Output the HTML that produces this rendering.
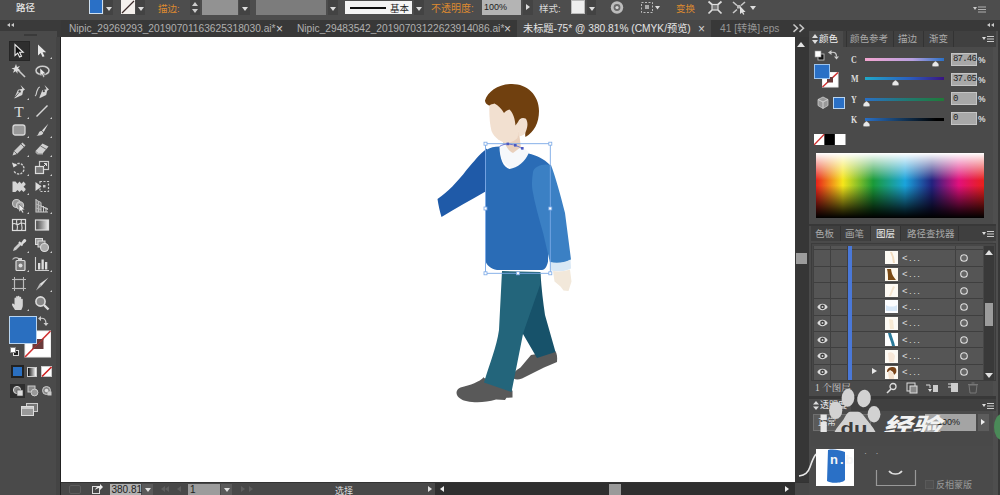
<!DOCTYPE html>
<html><head><meta charset="utf-8">
<style>
*{margin:0;padding:0;box-sizing:border-box}
html,body{width:1000px;height:495px;overflow:hidden;background:#4a4a4a;font-family:"Liberation Sans","Noto Sans CJK SC",sans-serif;font-size:9px;color:#d6d6d6}
.a,.a *{position:absolute}
#top{left:0;top:0;width:1000px;height:20px;background:#4d4d4d}
#tabs{left:61px;top:20px;width:748px;height:17px;background:#383838}
.tab{top:0;height:17px;line-height:18.5px;font-size:10.2px;color:#b0b0b0;white-space:nowrap}
#canvas{left:61px;top:37px;width:734px;height:445px;background:#fff}
#left{left:0;top:20px;width:61px;height:475px;background:#4a4a4a}
#vscroll{left:795px;top:37px;width:14px;height:445px;background:#363636}
#status{left:61px;top:482px;width:748px;height:13px;background:#484848;border-top:1px solid #333}
#right{left:809px;top:20px;width:191px;height:475px;background:#4a4a4a}
.or{color:#dd8a30}
.t{white-space:nowrap;line-height:1}
.dd{background:#434343}
.dd:after{content:"";position:absolute;left:50%;top:50%;margin:-1px 0 0 -3px;border:3px solid transparent;border-top:4px solid #ddd;border-bottom:0}
</style></head><body>
<!-- TOP -->
<div id="top" class="a">
 <div class="t" style="left:16px;top:2.5px;font-size:9.5px;color:#e8e8e8;font-weight:500">路径</div>
 <div style="left:89px;top:0;width:14px;height:14px;background:#2a70c6;border:1px solid #cfe0f0;border-top:0"></div>
 <div class="dd" style="left:104px;top:0;width:9px;height:15px"></div>
 <svg style="left:121px;top:0" width="14" height="14"><rect width="14" height="14" fill="#f4f0ec"/><line x1="1" y1="13" x2="13" y2="1" stroke="#3a2a2a" stroke-width="1.3"/></svg>
 <div class="dd" style="left:136px;top:0;width:9px;height:15px"></div>
 <div class="t or" style="left:158px;top:4px;font-size:9.5px">描边:</div>
 <div style="left:190px;top:0;width:10px;height:15px;background:#444"></div>
 <div style="left:192px;top:2px;border:3px solid transparent;border-bottom:4px solid #ccc;border-top:0"></div>
 <div style="left:192px;top:9px;border:3px solid transparent;border-top:4px solid #ccc;border-bottom:0"></div>
 <div style="left:202px;top:0;width:36px;height:15px;background:#929292"></div>
 <div class="dd" style="left:239px;top:0;width:11px;height:15px"></div>
 <div style="left:256px;top:0;width:70px;height:15px;background:#7c7c7c"></div>
 <div class="dd" style="left:328px;top:0;width:10px;height:15px"></div>
 <div style="left:345px;top:1px;width:67px;height:13px;background:#f4f4f4"></div>
 <div style="left:350px;top:7px;width:36px;height:2px;background:#111"></div>
 <div class="t" style="left:390px;top:4px;font-size:9.5px;color:#222">基本</div>
 <div class="dd" style="left:414px;top:0;width:10px;height:15px"></div>
 <div class="t or" style="left:431px;top:4px;font-size:10px">不透明度:</div>
 <div style="left:482px;top:0;width:39px;height:15px;background:#b4b4b4"></div>
 <div class="t" style="left:484px;top:3px;font-size:9px;color:#222">100%</div>
 <div style="left:523px;top:0;width:10px;height:15px;background:#444"></div>
 <div style="left:526px;top:4px;border:3px solid transparent;border-left:4px solid #ddd;border-right:0"></div>
 <div class="t" style="left:539px;top:4px;font-size:9.5px;color:#d8d8d8">样式:</div>
 <div style="left:571px;top:0;width:14px;height:14px;background:#eee;border:1px solid #bbb"></div>
 <div class="dd" style="left:587px;top:0;width:9px;height:15px"></div>
 <svg style="left:609px;top:0" width="16" height="16"><circle cx="8" cy="7.5" r="6.2" fill="#bdbdbd"/><circle cx="8" cy="7.5" r="3.4" fill="#6a6a6a"/><circle cx="8" cy="7.5" r="1.6" fill="#d8d8d8"/></svg>
 <svg style="left:640px;top:1px" width="22" height="14"><rect x="1.5" y="1.5" width="11" height="10" fill="none" stroke="#bbb" stroke-dasharray="2 1.5"/><rect x="5" y="4" width="4" height="4" fill="#aaa"/><path d="M15 5l5 0l-2.5 3.5z" fill="#ddd"/></svg>
 <div class="t or" style="left:676px;top:4px;font-size:9.5px">变换</div>
 <svg style="left:707px;top:0" width="16" height="15"><rect x="5" y="4.500" width="6" height="5.500" fill="#777" stroke="#ddd" stroke-width="1.200"/><path d="M1.500 1.500l3.500 3M14.500 1.500l-3.500 3M1.500 13.500l3.500-3.500M14.500 13.500l-3.500-3.500" stroke="#ddd" stroke-width="1.700"/></svg>
 <svg style="left:731px;top:0" width="16" height="15"><path d="M2 2l4 3.500M14 2l-4 3.500M2 13l4-3.500" stroke="#c8c8c8" stroke-width="1.600"/><rect x="6" y="5" width="3.500" height="3.500" fill="#bbb"/><path d="M9 6v8l2-1.500 1.200 2.300 1.200-.6-1.200-2.300h2.400z" fill="#e0e0e0"/></svg>
 <div style="left:750px;top:6px;border:3.500px solid transparent;border-top:4px solid #ddd;border-bottom:0"></div>
 <svg style="left:973px;top:5px" width="14" height="10"><path d="M0 2l4 0l-2 3z" fill="#ccc"/><path d="M5 2h8M5 4.5h8M5 7h8" stroke="#b0b0b0" stroke-width="1.1"/></svg>
</div>
<!-- LEFT -->
<div id="left" class="a">
 <div style="left:0;top:0;width:57px;height:11px;background:#3a3a3a"></div>
 <div style="left:57px;top:0;width:4px;height:17px;background:#3a3a3a"></div>
 <div style="left:7px;top:3px;border:2.5px solid transparent;border-right:3px solid #ccc;border-left:0"></div>
 <div style="left:11px;top:3px;border:2.5px solid transparent;border-right:3px solid #ccc;border-left:0"></div>
 <div style="left:24px;top:14px;width:13px;height:2px;background:#3a3a3a"></div>
 <div style="left:56px;top:17px;width:4px;height:458px;background:#444"></div><div style="left:60px;top:17px;width:1.5px;height:458px;background:#222"></div><div id="tools"><div style="left:9px;top:21px;width:21px;height:20px;background:#2e2e2e;border:1px solid #262626"></div><svg style="left:11px;top:23px" width="16" height="16" viewBox="0 0 16 16" ><path d="M4 1.5v11l2.7-2.4 1.9 4 1.9-.9-1.9-3.9h3.6z" fill="#111" stroke="#eee" stroke-width="1.1"/></svg><svg style="left:34px;top:23px" width="16" height="16" viewBox="0 0 16 16" ><path d="M4 1.5v11l2.7-2.4 1.9 4 1.9-.9-1.9-3.9h3.6z" fill="#e6e6e6"/></svg><div style="left:50px;top:37px;border:1.500px solid transparent;border-right-color:#ccc;border-bottom-color:#ccc"></div><svg style="left:11px;top:44px" width="16" height="16" viewBox="0 0 16 16" ><path d="M5 4l9 9" stroke="#ccc" stroke-width="1.6"/><path d="M5 0l1 3 3-1-2 2.5 2.5 2-3 .2 0 3-1.8-2.5-2.7 1.5 1.2-3-2.7-1.5 3-.5z" fill="#ddd"/></svg><svg style="left:34px;top:44px" width="16" height="16" viewBox="0 0 16 16" ><ellipse cx="8.5" cy="6.5" rx="6.5" ry="4.3" fill="none" stroke="#ccc" stroke-width="1.6"/><path d="M6 4v8l2-1.6 1.3 3 1.4-.6-1.3-3h2.6z" fill="#e6e6e6" stroke="#444" stroke-width=".5"/></svg><svg style="left:11px;top:64px" width="16" height="16" viewBox="0 0 16 16" ><path d="M9.5 1l4.5 4.5-1.8 1.2-1 4.3-7.7 3.5 0-1 3.5-7.7 4.3-1z" fill="#d6d6d6"/><circle cx="8.6" cy="7.4" r="1.2" fill="#444"/><path d="M3.6 13.6l4.4-5" stroke="#444" stroke-width=".8"/></svg><div style="left:27px;top:78px;border:1.500px solid transparent;border-right-color:#ccc;border-bottom-color:#ccc"></div><svg style="left:34px;top:64px" width="16" height="16" viewBox="0 0 16 16" ><path d="M10.5 1l4.5 4.5-1.8 1.2-1 4.3-6.7 3.2 0-1 2.8-7 4.3-1z" fill="#d6d6d6"/><circle cx="9.8" cy="7.2" r="1.1" fill="#444"/><path d="M1 12c2-1 1-3 2-5s1-4 3-4" stroke="#ccc" stroke-width="1.2" fill="none"/></svg><svg style="left:11px;top:83px" width="16" height="16" viewBox="0 0 16 16" ><text x="8" y="13.5" text-anchor="middle" font-family="Liberation Serif,serif" font-size="15.5" fill="#ddd">T</text></svg><div style="left:27px;top:97px;border:1.500px solid transparent;border-right-color:#ccc;border-bottom-color:#ccc"></div><svg style="left:34px;top:83px" width="16" height="16" viewBox="0 0 16 16" ><path d="M2.5 13.5l11-11" stroke="#d6d6d6" stroke-width="1.5"/></svg><div style="left:50px;top:97px;border:1.500px solid transparent;border-right-color:#ccc;border-bottom-color:#ccc"></div><svg style="left:11px;top:102px" width="16" height="16" viewBox="0 0 16 16" ><rect x="2" y="3" width="12" height="10" rx="2.3" fill="#999" stroke="#d6d6d6" stroke-width="1.3"/></svg><div style="left:27px;top:116px;border:1.500px solid transparent;border-right-color:#ccc;border-bottom-color:#ccc"></div><svg style="left:34px;top:102px" width="16" height="16" viewBox="0 0 16 16" ><path d="M14.5 1.5l-6.5 7 1.7 1.6z" fill="#ddd"/><path d="M7.6 9l1.8 1.8c-.3 2-2.5 3-7 3 2-1 2-2.5 3-4 .6-.8 1.5-1 2.2-.8z" fill="#d0d0d0"/></svg><div style="left:50px;top:116px;border:1.500px solid transparent;border-right-color:#ccc;border-bottom-color:#ccc"></div><svg style="left:11px;top:121px" width="16" height="16" viewBox="0 0 16 16" ><path d="M11.5 1.5l3 3-8.5 8.5-4.5 1.5 1.5-4.5z" fill="#ccc"/><path d="M3.2 10.2l2.8 2.8" stroke="#555" stroke-width=".8"/><path d="M10 3l3 3" stroke="#555" stroke-width=".8"/></svg><div style="left:27px;top:135px;border:1.500px solid transparent;border-right-color:#ccc;border-bottom-color:#ccc"></div><svg style="left:34px;top:121px" width="16" height="16" viewBox="0 0 16 16" ><path d="M8.5 2.5l6 3-5.5 6.5h-5l-2.5-2z" fill="#d0d0d0"/><path d="M6.5 5l5.500 3.200" stroke="#555" stroke-width=".8"/><path d="M1.500 10l2.500 2h5v1.5h-5.500l-2-1.800z" fill="#aaa"/></svg><div style="left:50px;top:135px;border:1.500px solid transparent;border-right-color:#ccc;border-bottom-color:#ccc"></div><svg style="left:11px;top:140px" width="16" height="16" viewBox="0 0 16 16" ><path d="M3.5 5.500a5.300 5.300 0 1 1-.8 5" fill="none" stroke="#ccc" stroke-width="1.4" stroke-dasharray="2.2 1.200"/><path d="M1 2.500l1.500 5 4-2.500z" fill="#ddd"/></svg><div style="left:27px;top:154px;border:1.500px solid transparent;border-right-color:#ccc;border-bottom-color:#ccc"></div><svg style="left:34px;top:140px" width="16" height="16" viewBox="0 0 16 16" ><rect x="5.500" y="1.500" width="9" height="8" fill="none" stroke="#ccc" stroke-width="1.200"/><rect x="1.500" y="6.500" width="8" height="7" fill="#777" stroke="#ddd" stroke-width="1.200"/><path d="M9 7l3.500-3.500m0 2.500v-2.500h-2.500" stroke="#ddd" fill="none"/></svg><div style="left:50px;top:154px;border:1.500px solid transparent;border-right-color:#ccc;border-bottom-color:#ccc"></div><svg style="left:11px;top:159px" width="16" height="16" viewBox="0 0 16 16" ><path d="M1.500 2.500h3l2 2.200 2-2.200 2 2.200 2-2.200 2 2.200v1l-2 2 2 2v1.300l-2 2-2-2-2 2-2-2-2 2h-3z" fill="#d6d6d6"/></svg><div style="left:27px;top:173px;border:1.500px solid transparent;border-right-color:#ccc;border-bottom-color:#ccc"></div><svg style="left:34px;top:159px" width="16" height="16" viewBox="0 0 16 16" ><path d="M1.500 3l6 4.500-6 4.500z" fill="#ddd"/><rect x="6" y="2.500" width="8.500" height="10" fill="none" stroke="#ccc" stroke-width="1.200" stroke-dasharray="2 1.500"/><rect x="9" y="6" width="2.500" height="2.500" fill="#ccc"/></svg><svg style="left:11px;top:178px" width="16" height="16" viewBox="0 0 16 16" ><circle cx="5.500" cy="5.500" r="4" fill="#999" stroke="#ccc" stroke-width="1.100"/><circle cx="9" cy="7.500" r="3.600" fill="#aaa" stroke="#ccc" stroke-width="1.100"/><path d="M8 6v8l2-1.600 1.300 2.600 1.400-.6-1.300-2.600h2.600z" fill="#eee" stroke="#444" stroke-width=".5"/></svg><div style="left:27px;top:192px;border:1.500px solid transparent;border-right-color:#ccc;border-bottom-color:#ccc"></div><svg style="left:34px;top:178px" width="16" height="16" viewBox="0 0 16 16" ><path d="M2 1v13h12" stroke="#ccc" stroke-width="1.100" fill="none"/><path d="M2 2l5 2.500v9.500M2 6l5 2 7 3M2 10l5 1.500M4.500 3v11M7 8l7 3.500M9.500 8v6M12 9.500v4.500" stroke="#ccc" stroke-width="1" fill="none"/><path d="M2 2l5 2.500v9.500h-5z" fill="#aaa" opacity=".6"/></svg><div style="left:50px;top:192px;border:1.500px solid transparent;border-right-color:#ccc;border-bottom-color:#ccc"></div><svg style="left:11px;top:197px" width="16" height="16" viewBox="0 0 16 16" ><rect x="1.500" y="2.500" width="13" height="11" fill="none" stroke="#ddd" stroke-width="1.200"/><path d="M1.500 7c3-2 4 2 6.500 0s4-1 6.500 0M6 2.500c-2 3 2 5 0 11M10.500 2.500c-1.500 4 2 6 0 11" stroke="#ddd" stroke-width="1.100" fill="none"/></svg><svg style="left:34px;top:197px" width="16" height="16" viewBox="0 0 16 16" ><defs><linearGradient id="gt"><stop offset="0" stop-color="#444"/><stop offset="1" stop-color="#eee"/></linearGradient></defs><rect x="1.500" y="3" width="13" height="10" fill="url(#gt)" stroke="#ddd" stroke-width="1.200"/></svg><svg style="left:11px;top:217px" width="16" height="16" viewBox="0 0 16 16" ><path d="M2 14l1-3 5.500-5.500 2 2-5.500 5.500z" fill="#ccc"/><path d="M8 5l3.500 3.500" stroke="#ddd" stroke-width="2"/><path d="M10 6l2.500-3.500a1.600 1.600 0 0 1 2.300 2.300l-3.300 2.700z" fill="#ddd"/></svg><div style="left:27px;top:231px;border:1.500px solid transparent;border-right-color:#ccc;border-bottom-color:#ccc"></div><svg style="left:34px;top:217px" width="16" height="16" viewBox="0 0 16 16" ><rect x="1.500" y="1.500" width="7" height="6" fill="#999" stroke="#ddd"/><rect x="4" y="4" width="7" height="6" fill="#888" stroke="#ddd"/><circle cx="10.500" cy="10.500" r="4" fill="#aaa" stroke="#ddd" stroke-width="1.100"/></svg><div style="left:50px;top:231px;border:1.500px solid transparent;border-right-color:#ccc;border-bottom-color:#ccc"></div><svg style="left:11px;top:236px" width="16" height="16" viewBox="0 0 16 16" ><rect x="5" y="4.500" width="9" height="10" rx="1" fill="#777" stroke="#ddd" stroke-width="1.200"/><circle cx="9.500" cy="9.500" r="2" fill="#ddd"/><path d="M1.500 3.500c2-2.500 5-2.500 7 0" stroke="#bbb" stroke-width="1.200" fill="none"/><rect x="7" y="2" width="4" height="2.500" fill="#ccc"/></svg><div style="left:27px;top:250px;border:1.500px solid transparent;border-right-color:#ccc;border-bottom-color:#ccc"></div><svg style="left:34px;top:236px" width="16" height="16" viewBox="0 0 16 16" ><path d="M1.500 1v13.500h13.500" stroke="#ccc" stroke-width="1.100" fill="none"/><rect x="4" y="7" width="2.300" height="6.500" fill="#ddd"/><rect x="7.500" y="3.500" width="2.300" height="10" fill="#ddd"/><rect x="11" y="6" width="2.300" height="7.500" fill="#ddd"/></svg><div style="left:50px;top:250px;border:1.500px solid transparent;border-right-color:#ccc;border-bottom-color:#ccc"></div><svg style="left:11px;top:256px" width="16" height="16" viewBox="0 0 16 16" ><rect x="3.500" y="3.500" width="9" height="9" fill="none" stroke="#bbb" stroke-width="1.200"/><path d="M1 3.500h14M1 12.500h14M3.500 1v14M12.500 1v14" stroke="#bbb" stroke-width="1"/></svg><svg style="left:34px;top:256px" width="16" height="16" viewBox="0 0 16 16" ><path d="M14.500 1.500l-9 6.500 2 2z" fill="#ddd"/><path d="M5.500 8l2 2-5.500 4.500z" fill="#bbb"/></svg><div style="left:50px;top:270px;border:1.500px solid transparent;border-right-color:#ccc;border-bottom-color:#ccc"></div><svg style="left:11px;top:275px" width="16" height="16" viewBox="0 0 16 16" ><path d="M4 15c-1-2-3-4-3-5.500s1.500-1 2.500.3v-6.300c0-1.200 1.600-1.200 1.600 0v-1.500c0-1.200 1.700-1.200 1.700 0v-.4c0-1.200 1.700-1.200 1.700 0v1c0-1.100 1.700-1.100 1.700 0v2c0-1.100 1.600-1.100 1.600 0v6c0 2-1 3-1.500 4.400z" fill="#d6d6d6"/></svg><div style="left:27px;top:289px;border:1.500px solid transparent;border-right-color:#ccc;border-bottom-color:#ccc"></div><svg style="left:34px;top:275px" width="16" height="16" viewBox="0 0 16 16" ><circle cx="6.500" cy="6.500" r="4.600" fill="#888" stroke="#ddd" stroke-width="1.600"/><path d="M10 10l4.500 4.500" stroke="#ddd" stroke-width="2.400"/></svg>
<svg style="left:24px;top:310px" width="28" height="28"><rect x="1" y="1" width="25.500" height="26" fill="#fff" stroke="#eee"/><path d="M1 27L26.500 1" stroke="#d03030" stroke-width="1.600"/><rect x="8.500" y="9" width="11" height="10" fill="#6a3a3a"/><path d="M8.500 19L19.500 9" stroke="#b03030" stroke-width="1"/></svg>
<div style="left:9px;top:296px;width:28px;height:28px;background:#2a6fc0;border:1px solid #b8d4f0"></div>
<svg style="left:38px;top:295px" width="12" height="12"><path d="M2 3.500c4-1 6 1 6 5" fill="none" stroke="#ccc" stroke-width="1.200"/><path d="M0 3.500l3-2.500v5zM8 11l-2.500-3h5z" fill="#ccc"/></svg>
<div style="left:13px;top:330px;width:6px;height:6px;background:#222;border:1px solid #ddd"></div>
<div style="left:10px;top:327px;width:6px;height:6px;background:#fff;border:1px solid #888"></div>
<div style="left:11px;top:345px;width:13px;height:13px;background:#222"></div>
<div style="left:13px;top:347px;width:9px;height:9px;background:#2a6fc0"></div>
<div style="left:27px;top:347px;width:10px;height:10px;background:linear-gradient(90deg,#111,#fff);border:1px solid #ccc"></div>
<svg style="left:41px;top:346px" width="12" height="12"><rect x=".5" y=".5" width="10" height="10" fill="#fff" stroke="#ccc"/><path d="M1 10.500L10.500 1" stroke="#d02020" stroke-width="1.600"/></svg>
<div style="left:10px;top:364px;width:15px;height:14px;background:#2e2e2e"></div>
<svg style="left:12px;top:365px" width="12" height="12"><circle cx="5" cy="5" r="3.600" fill="#888" stroke="#ddd"/><rect x="5" y="5" width="6" height="6" fill="#ddd" stroke="#444" stroke-width=".6"/></svg>
<svg style="left:27px;top:365px" width="12" height="12"><rect x="1" y="1" width="7" height="6" fill="#888" stroke="#ccc"/><circle cx="7.500" cy="7.500" r="3.400" fill="#999" stroke="#ccc"/></svg>
<svg style="left:41px;top:365px" width="12" height="12"><circle cx="5.500" cy="5.500" r="4" fill="#888" stroke="#ccc"/><circle cx="5.500" cy="5.500" r="1.800" fill="#ddd"/><rect x="6.500" y="6.500" width="4" height="4" fill="#ccc"/></svg>
<svg style="left:21px;top:383px" width="18" height="14"><rect x="5.500" y=".5" width="11" height="8" fill="#777" stroke="#ccc"/><rect x=".5" y="3.500" width="12" height="9" fill="#999" stroke="#ddd"/><rect x="1" y="4" width="11" height="2" fill="#ccc"/></svg>
</div><!--/tools-->
</div>
<!-- TABS -->
<div id="tabs" class="a">
 <div class="tab" style="left:8px">Nipic_29269293_20190701163625318030.ai*</div><div class="tab" style="left:216px;font-size:12px;color:#d0d0d0;margin-left:-1px;line-height:19px">×</div>
 <div class="tab" style="left:236px">Nipic_29483542_20190703122623914086.ai*</div><div class="tab" style="left:444px;font-size:12px;color:#d0d0d0;margin-left:-1px;line-height:19px">×</div>
 <div style="left:455.5px;top:0;width:194.5px;height:17px;background:#474747"></div>
 <div class="tab" style="left:462px;color:#e4e4e4">未标题-75* @ 380.81% (CMYK/预览)</div><div class="tab" style="left:638px;font-size:12px;color:#d0d0d0;margin-left:-1px;line-height:19px">×</div>
 <div class="tab" style="left:659px;color:#969696">41 [转换].eps</div>
 <svg style="left:731px;top:4px" width="16" height="9"><path d="M1.500 .5l4 3.700-4 3.700M7.500 .5l4 3.700-4 3.700" fill="none" stroke="#c8c8c8" stroke-width="1.500"/></svg>
</div>
<div id="canvas" class="a"><svg style="left:0;top:0" width="734" height="445" viewBox="61 37 734 445">
<!-- back shoe -->
<path d="M531 355l24-4c2 2 2.500 6 2 11l-7 3-6 2.500-22 11c-5 2-9 1-9.500-2 0-3 3-6 8-9z" fill="#595959"/>
<!-- front shoe -->
<path d="M484 378l26 9 2.500 4v6.500l-6 .3-1.500 2.200-9-.5c-8 2.500-16 3-24 2.500-7-.5-12-2.500-14.500-6-2-3.500-1-6.500 3-8.500 10-2.500 19-5.500 23.500-10.500z" fill="#595959"/>
<!-- back leg -->
<path d="M522 274l18.500 0c1 14 2.500 28 4.500 41l10.500 37-18.500 6-14-24z" fill="#17526a"/>
<!-- front leg -->
<path d="M502 271l38.500 1-.5 13c-4 12-12 34-17 49l-11.500 58-27.500-9.500c6-20 12.500-35 15-52.500z" fill="#23657b"/>
<!-- left (back) arm -->
<path d="M487 148.500l-1.500 43c-14 8-30 17-44 25.500-1.500-5-3-11-4-18 10-7 20-17 29-29 7-8 13-16 20.500-21.500z" fill="#1f5aa8"/>
<!-- neck -->
<path d="M502 132l17 0 2 16-8 10-9-6z" fill="#e9d0bc"/>
<!-- collar -->
<path d="M499.500 149c1.500-2.500 3.500-4.500 5.500-5.500 1.500 4 4 7.500 8 9.500l8-6c4 1.500 8 4.500 10 8-3 7-9 12-16 14-7-1-12-6-14-12z" fill="#f6f8fb"/>
<!-- sweater body -->
<path d="M486 150c4-2.500 8.500-3.500 13.500-3.500 0 12 4 21 10 22.500 8-1 16-8 19-15.500 8 2 15 5 21 11l-1.500 97c-1 5-3 8-6 8.500l-45 0c-6-1-11-5-11.500-9.500z" fill="#2a6cb6"/>
<!-- right arm -->
<path d="M533 172c1-5 9-9 18-7 4.500 12 9.500 30 14 48l6 46.500c-6 4-14 4.500-21 3l-7-30c-4-14-8-28-10.500-42-1-6-.5-12 .5-18.500z" fill="#3b80c4"/>
<!-- cuff -->
<path d="M550 262c6 1.500 14 1 20.500-2.500l.5 9c-6 3-14 3.500-20.500 2z" fill="#d9e8f5"/>
<!-- hand -->
<path d="M553 271c5 1 12 .5 17-1.500l1.500 12-3 9.500-5-.5-3-4-6-5z" fill="#f2e8da"/>
<!-- face -->
<path d="M489.500 104l14-4 14 8 2 20-2 10c-3 3-7 5-11 5-6-1-12-5-15-12-2-8-2.500-18-2-27z" fill="#f2e0d0"/>
<!-- ear -->
<path d="M518 122c2-3.500 6-5 8.500-3 2.500 3 1.500 10-1 14-2 2.500-5 3.500-7 3z" fill="#f2e0d0"/>
<!-- hair -->
<path d="M489 105.500c-2.500-1-4-3-4-5 3-9 13-16.500 27-16.500 15 0 27 11 27 27 0 12-5 21-13.500 26-.5-2-.5-4 .5-6 2-5 2-10-.5-12.500-3-1.500-6 0-7.500 3.500l-2.500 3.500c-.5-6-2-12-6-16-2 .5-4 1.500-5.500 3.500-2.500-4-5.500-7.500-9.500-9.500-2 .5-4 1-5 2z" fill="#70400f"/>
<!-- selection bbox -->
<g fill="none" stroke="#7aa8e6" stroke-width=".9"><rect x="485.500" y="143.700" width="64.800" height="129.600"/></g>
<path d="M499.500 146.500c3-2 6-2.500 9-2.500 5 .5 10 2 14 5" fill="none" stroke="#5a6ad0" stroke-width=".9"/>
<g fill="#fff" stroke="#7aa8e6" stroke-width=".8"><rect x="484" y="142.200" width="3" height="3"/><rect x="548.800" y="142.200" width="3" height="3"/><rect x="484" y="271.800" width="3" height="3"/><rect x="548.800" y="271.800" width="3" height="3"/><rect x="516.500" y="271.800" width="3" height="3"/><rect x="484" y="207" width="3" height="3"/><rect x="548.800" y="207" width="3" height="3"/></g>
<g fill="#4a58c0"><rect x="506.500" y="142.600" width="2.600" height="2.600"/><rect x="514" y="144" width="2.600" height="2.600"/><rect x="521" y="147" width="2.600" height="2.600"/></g>
</svg></div><!--/canvas-->
<div id="vscroll" class="a">
 <div style="left:2px;top:5px;border:4px solid transparent;border-bottom:5px solid #e4e4e4;border-top:0"></div>
 <div style="left:1px;top:216px;width:11px;height:11px;background:#9c9c9c"></div>
</div>
<div id="status" class="a"><div style="left:8px;top:2px;width:12px;height:9px;border:1px solid #5c5c5c;border-radius:2px"></div><svg style="left:31px;top:1px" width="11" height="10"><rect x=".5" y="2.500" width="7" height="7" fill="none" stroke="#ddd"/><path d="M3 6c1-3 3-4 5-4v-2l3 3-3 3v-2c-2 0-3 .5-5 2z" fill="#eee"/></svg><div style="left:49px;top:1px;width:31px;height:12px;background:#b0b0b0"></div><div class="t" style="left:50.5px;top:1.5px;font-size:10px;color:#222">380.81</div><div style="left:81px;top:1px;width:11px;height:12px;background:#5a5a5a"></div><div style="left:83.5px;top:5px;border:3px solid transparent;border-top:4px solid #e0e0e0;border-bottom:0"></div><div style="left:100px;top:3px;border:3px solid transparent;border-right:4px solid #5e5e5e;border-left:0"></div><div style="left:104px;top:3px;border:3px solid transparent;border-right:4px solid #5e5e5e;border-left:0"></div><div style="left:116px;top:3px;border:3px solid transparent;border-right:4px solid #5e5e5e;border-left:0"></div><div style="left:127px;top:1px;width:32px;height:12px;background:#9c9c9c"></div><div class="t" style="left:129px;top:1.5px;font-size:10px;color:#222">1</div><div style="left:160px;top:1px;width:11px;height:12px;background:#5a5a5a"></div><div style="left:162.5px;top:5px;border:3px solid transparent;border-top:4px solid #e0e0e0;border-bottom:0"></div><div style="left:180px;top:3px;border:3px solid transparent;border-left:4px solid #5e5e5e;border-right:0"></div><div style="left:188px;top:3px;border:3px solid transparent;border-left:4px solid #5e5e5e;border-right:0"></div><div class="t" style="left:274px;top:3.5px;font-size:9px;color:#ddd">选择</div><div style="left:367px;top:3px;border:3px solid transparent;border-left:4px solid #ddd;border-right:0"></div><div style="left:374px;top:0px;width:360px;height:13px;background:#2f2f2f"></div><div style="left:379px;top:3px;border:3px solid transparent;border-right:4px solid #eee;border-left:0"></div><div style="left:548px;top:1px;width:12px;height:12px;background:#9a9a9a"></div><div style="left:724px;top:3px;border:3px solid transparent;border-left:4px solid #eee;border-right:0"></div><div style="left:734px;top:0px;width:14px;height:13px;background:#484848"></div></div><!--/status-->
<div id="right" class="a"><div style="left:0px;top:0px;width:191px;height:11px;background:#393939"></div><div style="left:178px;top:3px;border:2.500px solid transparent;border-right:3px solid #ccc;border-left:0"></div><div style="left:182px;top:3px;border:2.500px solid transparent;border-right:3px solid #ccc;border-left:0"></div><div style="left:183.5px;top:11px;width:5px;height:464px;background:#4e4e4e"></div><div style="left:188.5px;top:11px;width:2.5px;height:464px;background:#383838"></div><div style="left:2px;top:11px;width:185px;height:16px;background:#404040"></div><div style="left:2px;top:11px;width:32px;height:16px;background:#4a4a4a"></div><svg style="left:3px;top:14px" width="6" height="10"><path d="M3 0l3 4h-6zM3 10l3-4h-6z" fill="#ddd"/></svg><div class="t" style="left:10px;top:14px;font-size:9.500px;color:#f0f0f0">颜色</div><div class="t" style="left:41px;top:14px;font-size:9.500px;color:#aaa">颜色参考</div><div class="t" style="left:89px;top:14px;font-size:9.500px;color:#aaa">描边</div><div class="t" style="left:120px;top:14px;font-size:9.500px;color:#aaa">渐变</div><div style="left:37px;top:11px;width:1px;height:16px;background:#333"></div><div style="left:84px;top:11px;width:1px;height:16px;background:#333"></div><div style="left:114px;top:11px;width:1px;height:16px;background:#333"></div><div style="left:144px;top:11px;width:1px;height:16px;background:#333"></div><svg style="left:173px;top:15px" width="13" height="9"><path d="M0 2l4 0l-2 3z" fill="#ddd"/><path d="M5 1.500h7M5 4h7M5 6.500h7" stroke="#ccc" stroke-width="1.200"/></svg><svg style="left:5px;top:30px" width="12" height="11"><rect x="4" y="4" width="6" height="6" fill="#111" stroke="#ccc" stroke-width=".8"/><rect x="1" y="1" width="6" height="6" fill="#fff" stroke="#999" stroke-width=".6"/></svg><svg style="left:19px;top:29px" width="12" height="11"><path d="M3 3.500c4-1 5.500 1 5.500 4" fill="none" stroke="#ccc" stroke-width="1.200"/><path d="M0 3.500l3.500-2.500v5zM8.500 10.500l-2.500-3h5z" fill="#ccc"/></svg><svg style="left:13px;top:52px" width="17" height="16"><rect x=".5" y=".5" width="15.500" height="14.500" fill="#fff" stroke="#eee"/><path d="M.5 15L16 .5" stroke="#d03030" stroke-width="1.500"/><rect x="5" y="5" width="6" height="5.500" fill="#6a3a3a"/></svg><div style="left:5px;top:44px;width:16px;height:15px;background:#2a70c6;border:1px solid #9cc4ee"></div><svg style="left:8px;top:76px" width="12" height="14"><path d="M6 1l5 2.500v6l-5 3-5-3v-6z" fill="#999" stroke="#ccc" stroke-width=".8"/><path d="M1 3.500l5 2.500 5-2.500M6 6v6.500" stroke="#ddd" stroke-width=".8" fill="none"/></svg><div style="left:24px;top:77px;width:12px;height:12px;background:#2a70c6;border:1px solid #b8d4f0"></div><div class="t" style="left:41.5px;top:35px;font-family:'Liberation Serif',serif;font-weight:bold;font-size:10px;color:#dcdcdc;transform:scaleX(.8);transform-origin:0 0">C</div><div style="left:56px;top:37.5px;width:79px;height:3.5px;background:linear-gradient(90deg,#f4a6d0,#b8a0e0 60%,#2a70c6)"></div><svg style="left:122px;top:41px" width="9" height="6"><path d="M4.500 0c2 1.500 3.500 2.500 3.500 4.200 0 1-.8 1.500-3.500 1.500s-3.500-.5-3.500-1.500c0-1.700 1.500-2.700 3.500-4.200z" fill="#e8e8e8" stroke="#444" stroke-width=".5"/></svg><div style="left:141.5px;top:32.5px;width:26px;height:13px;background:#a8a8a8;border:1px solid #c4c4c4"></div><div class="t" style="left:144px;top:35.0px;font-size:9px;color:#222;font-family:'Liberation Mono',monospace;letter-spacing:-.8px">87.46</div><div class="t" style="left:169px;top:35.5px;font-size:8.500px;color:#ddd;font-weight:bold">%</div><div class="t" style="left:41.5px;top:54px;font-family:'Liberation Serif',serif;font-weight:bold;font-size:10px;color:#dcdcdc;transform:scaleX(.8);transform-origin:0 0">M</div><div style="left:56px;top:56.5px;width:79px;height:3.5px;background:linear-gradient(90deg,#20a8c8,#2a60c0 55%,#3a1480)"></div><svg style="left:82px;top:60px" width="9" height="6"><path d="M4.500 0c2 1.500 3.500 2.500 3.500 4.200 0 1-.8 1.500-3.500 1.500s-3.500-.5-3.500-1.500c0-1.700 1.500-2.700 3.500-4.200z" fill="#e8e8e8" stroke="#444" stroke-width=".5"/></svg><div style="left:141.5px;top:52.5px;width:26px;height:13px;background:#a8a8a8;border:1px solid #c4c4c4"></div><div class="t" style="left:144px;top:55.0px;font-size:9px;color:#222;font-family:'Liberation Mono',monospace;letter-spacing:-.8px">37.05</div><div class="t" style="left:169px;top:55.5px;font-size:8.500px;color:#ddd;font-weight:bold">%</div><div class="t" style="left:41.5px;top:75px;font-family:'Liberation Serif',serif;font-weight:bold;font-size:10px;color:#dcdcdc;transform:scaleX(.8);transform-origin:0 0">Y</div><div style="left:56px;top:77.5px;width:79px;height:3.5px;background:linear-gradient(90deg,#2a70c6,#207a70 55%,#207a38)"></div><svg style="left:53px;top:81px" width="9" height="6"><path d="M4.500 0c2 1.500 3.500 2.500 3.500 4.200 0 1-.8 1.500-3.500 1.500s-3.500-.5-3.500-1.500c0-1.700 1.500-2.700 3.500-4.200z" fill="#e8e8e8" stroke="#444" stroke-width=".5"/></svg><div style="left:141.5px;top:72px;width:26px;height:13px;background:#a8a8a8;border:1px solid #c4c4c4"></div><div class="t" style="left:144px;top:74.5px;font-size:9px;color:#222;font-family:'Liberation Mono',monospace;letter-spacing:-.8px">0</div><div class="t" style="left:169px;top:75px;font-size:8.500px;color:#ddd;font-weight:bold">%</div><div class="t" style="left:41.5px;top:95px;font-family:'Liberation Serif',serif;font-weight:bold;font-size:10px;color:#dcdcdc;transform:scaleX(.8);transform-origin:0 0">K</div><div style="left:56px;top:97.5px;width:79px;height:3.5px;background:linear-gradient(90deg,#2a70c6,#143a60 45%,#000 90%)"></div><svg style="left:53px;top:101px" width="9" height="6"><path d="M4.500 0c2 1.500 3.500 2.500 3.500 4.200 0 1-.8 1.500-3.500 1.500s-3.500-.5-3.500-1.500c0-1.700 1.500-2.700 3.500-4.200z" fill="#e8e8e8" stroke="#444" stroke-width=".5"/></svg><div style="left:141.5px;top:91.5px;width:26px;height:13px;background:#a8a8a8;border:1px solid #c4c4c4"></div><div class="t" style="left:144px;top:94.0px;font-size:9px;color:#222;font-family:'Liberation Mono',monospace;letter-spacing:-.8px">0</div><div class="t" style="left:169px;top:94.5px;font-size:8.500px;color:#ddd;font-weight:bold">%</div><svg style="left:5px;top:114px" width="32" height="12"><rect x="0" y="0" width="10.500" height="11" fill="#fff"/><path d="M0 11L10.500 0" stroke="#d03030" stroke-width="1.300"/><rect x="10.500" y="0" width="10" height="11" fill="#000"/><rect x="21" y="0" width="10.500" height="11" fill="#fff"/></svg><div style="left:7px;top:133px;width:168px;height:65px;background:linear-gradient(180deg,#fff 0%,rgba(255,255,255,.7) 12%,rgba(255,255,255,0) 42%,rgba(0,0,0,0) 50%,rgba(0,0,0,.75) 86%,#000 100%),linear-gradient(90deg,#e8201a 0%,#f6e61a 16%,#1a9a38 34%,#1aa4dc 53%,#22227e 69%,#e2107c 85%,#e8201a 100%)"></div><div style="left:0px;top:204px;width:187px;height:2px;background:#383838"></div><div style="left:2px;top:206px;width:185px;height:15px;background:#3f3f3f"></div><div style="left:62px;top:206px;width:29px;height:16px;background:#4b4b4b"></div><div class="t" style="left:6px;top:209px;font-size:9.500px;color:#aaa">色板</div><div class="t" style="left:36px;top:209px;font-size:9.500px;color:#aaa">画笔</div><div class="t" style="left:67px;top:209px;font-size:9.500px;color:#f0f0f0">图层</div><div class="t" style="left:98px;top:209px;font-size:9.500px;color:#aaa">路径查找器</div><div style="left:31px;top:206px;width:1px;height:15px;background:#333"></div><div style="left:61px;top:206px;width:1px;height:15px;background:#333"></div><div style="left:91px;top:206px;width:1px;height:15px;background:#333"></div><div style="left:149px;top:206px;width:1px;height:15px;background:#333"></div><svg style="left:173px;top:210px" width="13" height="9"><path d="M0 2l4 0l-2 3z" fill="#ddd"/><path d="M5 1.500h7M5 4h7M5 6.500h7" stroke="#ccc" stroke-width="1.200"/></svg><div style="left:2px;top:223px;width:185px;height:138px;background:#474747;border:1px solid #3c3c3c"></div><div style="left:4px;top:226px;width:170px;height:134px;background:#555"></div><div style="left:175px;top:226px;width:10px;height:134px;background:#393939"></div><div style="left:176px;top:230px;border:4px solid transparent;border-bottom:5px solid #e0e0e0;border-top:0"></div><div style="left:176px;top:353px;border:4px solid transparent;border-top:5px solid #e0e0e0;border-bottom:0"></div><div style="left:176px;top:283px;width:8px;height:23px;background:#9c9c9c"></div><div style="left:4px;top:229px;width:170px;height:1px;background:#3f3f3f"></div><div style="left:4px;top:246px;width:170px;height:1px;background:#3f3f3f"></div><div style="left:4px;top:262px;width:170px;height:1px;background:#3f3f3f"></div><div style="left:4px;top:278px;width:170px;height:1px;background:#3f3f3f"></div><div style="left:4px;top:295px;width:170px;height:1px;background:#3f3f3f"></div><div style="left:4px;top:311px;width:170px;height:1px;background:#3f3f3f"></div><div style="left:4px;top:327px;width:170px;height:1px;background:#3f3f3f"></div><div style="left:4px;top:344px;width:170px;height:1px;background:#3f3f3f"></div><div style="left:4px;top:226px;width:1px;height:134px;background:#404040"></div><div style="left:20.5px;top:226px;width:1px;height:134px;background:#404040"></div><div style="left:38px;top:226px;width:1px;height:134px;background:#404040"></div><div style="left:146px;top:226px;width:1px;height:134px;background:#404040"></div><div style="left:39px;top:226px;width:4px;height:134px;background:#4a78d8"></div><svg style="left:75.5px;top:231px" width="13" height="13"><rect width="13" height="13" fill="#fdfaf4"/><path d="M5 1l2 5 1 6h2l-1-6-2-5z" fill="#f2dcc0"/></svg><div class="t" style="left:93px;top:232.8px;font-size:9.500px;color:#ddd;letter-spacing:1.500px">&lt;...</div><svg style="left:150px;top:233px" width="10" height="10"><circle cx="5" cy="5" r="3.300" fill="#666" stroke="#e0e0e0" stroke-width="1.100"/></svg><svg style="left:75.5px;top:248px" width="13" height="13"><rect width="13" height="13" fill="#fdf8ee"/><path d="M2 1c1 4 1 7 1 11h8c-2-3-4-4-5-11z" fill="#7a4a14"/></svg><div class="t" style="left:93px;top:249.17000000000002px;font-size:9.500px;color:#ddd;letter-spacing:1.500px">&lt;...</div><svg style="left:150px;top:249px" width="10" height="10"><circle cx="5" cy="5" r="3.300" fill="#666" stroke="#e0e0e0" stroke-width="1.100"/></svg><svg style="left:75.5px;top:264px" width="13" height="13"><rect width="13" height="13" fill="#fdfaf4"/><path d="M8 2l-2 5-2 5h2l2-5 2-4z" fill="#f6e6d0"/></svg><div class="t" style="left:93px;top:265.54px;font-size:9.500px;color:#ddd;letter-spacing:1.500px">&lt;...</div><svg style="left:150px;top:266px" width="10" height="10"><circle cx="5" cy="5" r="3.300" fill="#666" stroke="#e0e0e0" stroke-width="1.100"/></svg><svg style="left:75.5px;top:280px" width="13" height="13"><rect width="13" height="13" fill="#fcfdff"/><path d="M1 5c3 2 8 2 11 0v6h-11z" fill="#d8e8f8"/></svg><div class="t" style="left:93px;top:281.91px;font-size:9.500px;color:#ddd;letter-spacing:1.500px">&lt;...</div><svg style="left:150px;top:282px" width="10" height="10"><circle cx="5" cy="5" r="3.300" fill="#666" stroke="#e0e0e0" stroke-width="1.100"/></svg><svg style="left:8px;top:283px" width="11" height="8"><path d="M.3 4c2.300-4.200 8-4.200 10.400 0-2.400 4.200-8.100 4.200-10.400 0z" fill="#dcdcdc"/><circle cx="5.500" cy="3.900" r="2.300" fill="#3a3a3a"/><circle cx="5.500" cy="3.900" r="1" fill="#ccc"/></svg><svg style="left:75.5px;top:297px" width="13" height="13"><rect width="13" height="13" fill="#fdfaf4"/><path d="M4 2l4 1 1 9h-4z" fill="#f8ead4"/></svg><div class="t" style="left:93px;top:298.28000000000003px;font-size:9.500px;color:#ddd;letter-spacing:1.500px">&lt;...</div><svg style="left:150px;top:298px" width="10" height="10"><circle cx="5" cy="5" r="3.300" fill="#666" stroke="#e0e0e0" stroke-width="1.100"/></svg><svg style="left:8px;top:299px" width="11" height="8"><path d="M.3 4c2.300-4.200 8-4.200 10.400 0-2.400 4.200-8.100 4.200-10.400 0z" fill="#dcdcdc"/><circle cx="5.500" cy="3.900" r="2.300" fill="#3a3a3a"/><circle cx="5.500" cy="3.900" r="1" fill="#ccc"/></svg><svg style="left:75.5px;top:313px" width="13" height="13"><rect width="13" height="13" fill="#fff"/><path d="M3 0c1 5 3 8 4 13h3c-1-5-3-9-4-13z" fill="#2a7a9a"/></svg><div class="t" style="left:93px;top:314.65000000000003px;font-size:9.500px;color:#ddd;letter-spacing:1.500px">&lt;...</div><svg style="left:150px;top:315px" width="10" height="10"><circle cx="5" cy="5" r="3.300" fill="#666" stroke="#e0e0e0" stroke-width="1.100"/></svg><svg style="left:8px;top:316px" width="11" height="8"><path d="M.3 4c2.300-4.200 8-4.200 10.400 0-2.400 4.200-8.100 4.200-10.400 0z" fill="#dcdcdc"/><circle cx="5.500" cy="3.900" r="2.300" fill="#3a3a3a"/><circle cx="5.500" cy="3.900" r="1" fill="#ccc"/></svg><svg style="left:75.5px;top:330px" width="13" height="13"><rect width="13" height="13" fill="#fdfaf4"/><path d="M3 3c3-2 6 0 7 3l-1 6h-5z" fill="#f8e8d8"/></svg><div class="t" style="left:93px;top:331.02px;font-size:9.500px;color:#ddd;letter-spacing:1.500px">&lt;...</div><svg style="left:150px;top:331px" width="10" height="10"><circle cx="5" cy="5" r="3.300" fill="#666" stroke="#e0e0e0" stroke-width="1.100"/></svg><svg style="left:8px;top:332px" width="11" height="8"><path d="M.3 4c2.300-4.200 8-4.200 10.400 0-2.400 4.200-8.100 4.200-10.400 0z" fill="#dcdcdc"/><circle cx="5.500" cy="3.900" r="2.300" fill="#3a3a3a"/><circle cx="5.500" cy="3.900" r="1" fill="#ccc"/></svg><svg style="left:75.5px;top:346px" width="13" height="13"><rect width="13" height="13" fill="#fdfaf4"/><path d="M2 6c0-4 3-5 6-5s4 3 3 6l-2 2-1-3-3-2-2 2z" fill="#7a4418"/><path d="M3 6l2-1 3 2 1 3v3h-5z" fill="#f4e0cc"/></svg><div class="t" style="left:93px;top:347.39px;font-size:9.500px;color:#ddd;letter-spacing:1.500px">&lt;...</div><svg style="left:150px;top:347px" width="10" height="10"><circle cx="5" cy="5" r="3.300" fill="#666" stroke="#e0e0e0" stroke-width="1.100"/></svg><svg style="left:8px;top:348px" width="11" height="8"><path d="M.3 4c2.300-4.200 8-4.200 10.400 0-2.400 4.200-8.100 4.200-10.400 0z" fill="#dcdcdc"/><circle cx="5.500" cy="3.900" r="2.300" fill="#3a3a3a"/><circle cx="5.500" cy="3.900" r="1" fill="#ccc"/></svg><div style="left:63px;top:348px;border:3.500px solid transparent;border-left:5px solid #e8e8e8;border-right:0"></div><div class="t" style="left:6px;top:364px;font-size:9.500px;color:#d0d0d0;font-family:'Liberation Serif','Noto Serif CJK SC',serif">1 个图层</div><svg style="left:77px;top:362px" width="12" height="12"><circle cx="7" cy="4.500" r="3" fill="none" stroke="#ddd" stroke-width="1.300"/><path d="M5 7l-4 4" stroke="#ddd" stroke-width="1.600"/></svg><svg style="left:97px;top:362px" width="13" height="12"><rect x="1" y="1" width="8" height="8" fill="none" stroke="#ddd"/><rect x="4" y="4" width="7" height="7" fill="#888" stroke="#ddd"/></svg><svg style="left:116px;top:362px" width="14" height="12"><path d="M1 3h4v3" stroke="#ddd" fill="none"/><path d="M3 7l2 3 2-3z" fill="#ddd"/><rect x="8" y="3" width="5" height="7" fill="#ccc"/></svg><svg style="left:138px;top:362px" width="12" height="12"><rect x="4" y="1" width="7" height="9" fill="#ccc"/><path d="M1 2h3M1 5h3" stroke="#ddd"/></svg><svg style="left:158px;top:362px" width="12" height="12"><path d="M2 3h8l-1 8h-6zM1 2.500h10M4.500 1h3" fill="none" stroke="#777" stroke-width="1"/></svg><div style="left:0px;top:376px;width:187px;height:3px;background:#383838"></div><div style="left:2px;top:379px;width:185px;height:12px;background:#404040"></div><div style="left:2px;top:379px;width:40px;height:12px;background:#4a4a4a"></div><svg style="left:4px;top:381px" width="6" height="9"><path d="M3 0l3 3.500h-6zM3 9l3-3.500h-6z" fill="#ddd"/></svg><div class="t" style="left:11px;top:381px;font-size:9px;color:#eee">透明度</div><svg style="left:173px;top:382px" width="13" height="9"><path d="M0 2l4 0l-2 3z" fill="#ddd"/><path d="M5 1.500h7M5 4h7M5 6.500h7" stroke="#ccc" stroke-width="1.200"/></svg><div style="left:4px;top:394px;width:58px;height:17px;background:#5a5a5a;border:1px solid #707070"></div><div class="t" style="left:9px;top:398px;font-size:9px;color:#ddd">正常</div><div style="left:116px;top:394px;width:51px;height:17px;background:#a4a4a4"></div><div class="t" style="left:128px;top:398px;font-size:9px;color:#222">100%</div><div style="left:169px;top:394px;width:11px;height:17px;background:#5c5c5c"></div><div style="left:172px;top:399px;border:3px solid transparent;border-left:4px solid #eee;border-right:0"></div><div style="left:185px;top:394px;width:16px;height:26px;background:#4a8a58;border-radius:50%"></div><svg style="left:6px;top:366px" width="140" height="46" viewBox="815 386 140 46">
<g fill="#d2d2d2"><ellipse cx="848" cy="397.800" rx="6.400" ry="9" transform="rotate(6 848 397.800)"/><ellipse cx="864" cy="398.500" rx="6.800" ry="8.800" transform="rotate(8 864 398.500)"/><ellipse cx="835.700" cy="410.200" rx="6.600" ry="8.800"/><ellipse cx="874" cy="414.200" rx="6.400" ry="8.200" />
<path d="M850 411.800h8c3 0 5 3 8 7 3 4 7 8 9.500 13.200h-41c2.500-5 6-8.500 9-12.500 2.500-4 4-7.700 6.500-7.700z"/></g>
<text x="840.500" y="434" font-family="Liberation Sans,sans-serif" font-weight="bold" font-size="17" fill="#3c3c3c" textLength="27" lengthAdjust="spacingAndGlyphs">du</text>
<rect x="820.500" y="414.500" width="6.300" height="5.500" fill="#e6e6e6"/><rect x="820.500" y="422" width="6.300" height="10" fill="#e6e6e6"/>
<text x="883" y="433" font-family="Noto Sans CJK SC,sans-serif" font-weight="900" font-style="italic" font-size="21" fill="#f2f2f2" textLength="58" lengthAdjust="spacingAndGlyphs">经验</text>
</svg><div style="left:2px;top:412px;width:182px;height:14px;background:#494949"></div><svg style="left:7px;top:429px" width="38" height="37"><rect width="38" height="37" fill="#fff"/><path d="M12 1c5-1 12 0 17 2v28c-2 3-14 4-18 1z" fill="#2a70c6"/></svg><div class="t" style="left:21px;top:433px;font-size:13px;font-weight:bold;color:#f6f6f6;letter-spacing:2px">n.b</div><svg style="left:-11px;top:432px" width="20" height="26"><path d="M1 24c6-1 9-3 11-9s3-9 6-13" fill="none" stroke="#e8e8e8" stroke-width="1.600"/></svg><svg style="left:66px;top:450px" width="43" height="18"><path d="M1.500 0v15.500h39v-15.500" fill="none" stroke="#999" stroke-width="1.200"/><path d="M14 1c3 4 10 4 13 0" fill="none" stroke="#ddd" stroke-width="1.600"/></svg><div style="left:116px;top:460px;width:9px;height:9px;background:#4f4f4f;border:1px solid #5a5a5a"></div><div class="t" style="left:127px;top:461px;font-size:9px;color:#9a9a9a">反相蒙版</div><div class="t" style="left:55px;top:429px;font-size:9px;color:#aaa;letter-spacing:3px">· ·</div></div><!--/right-->
</body></html>
